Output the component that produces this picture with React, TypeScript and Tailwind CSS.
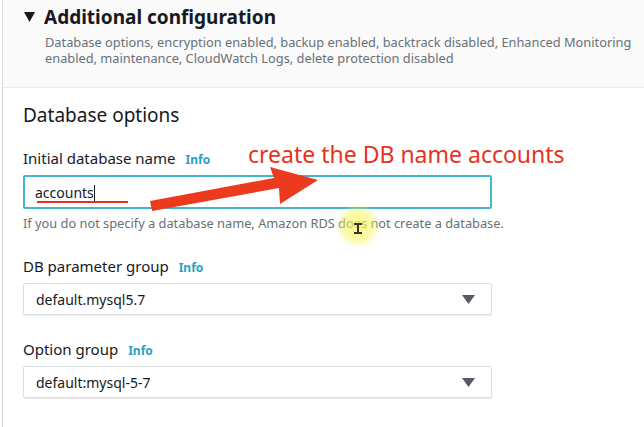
import React from "react";

const font = { fontFamily: '"Noto Sans", "Open Sans", sans-serif' };

function InfoLink() {
  return <span className="ml-[10px] text-[12px] font-bold text-[#2a9fc0]">Info</span>;
}

function SelectBox({ value }: { value: string }) {
  return (
    <div className="flex h-[32px] w-[469px] items-center justify-between rounded-[2px] border border-[#dadfe0] bg-white pl-[12px] pr-[16px] text-[14px] text-[#16191f] shadow-[0_1px_1px_rgba(0,0,0,0.08)]">
      <span>{value}</span>
      <svg width="13" height="9" viewBox="0 0 13 9">
        <path d="M0 0 H13 L6.5 9 Z" fill="#545b64" />
      </svg>
    </div>
  );
}

export default function App() {
  return (
    <div className="relative h-[427px] w-[644px] overflow-hidden bg-white pl-[2px]" style={font}>
      <div className="h-full border-l border-[#d5dbdb]">
        {/* expandable header */}
        <div className="h-[88px] border-b border-[#eaeded] bg-[#fafafa] pt-[4px]">
          <div className="flex items-center">
            <svg className="ml-[21px] mr-[9px]" width="11" height="10" viewBox="0 0 11 10">
              <path d="M0 0 H11 L5.5 10 Z" fill="#16191f" />
            </svg>
            <span className="text-[19px] font-bold leading-[26px] text-[#16191f]">Additional configuration</span>
          </div>
          <p className="ml-[42px] mt-[4px] w-[600px] text-[12.8px] leading-[16px] text-[#687078]">
            Database options, encryption enabled, backup enabled, backtrack disabled, Enhanced Monitoring enabled,
            maintenance, CloudWatch Logs, delete protection disabled
          </p>
        </div>

        <div className="pl-[20px] pt-[15px]">
          <h2 className="text-[19px] leading-[24px] text-[#16191f]">Database options</h2>

          <div className="mt-[21px] flex h-[20px] items-baseline text-[15px] leading-[20px] text-[#16191f]">
            Initial database name
            <InfoLink />
          </div>
          <div className="mt-[7px] flex h-[34px] w-[469px] items-center rounded-[2px] border-2 border-[#44b4cc] pl-[10px] text-[14px] text-[#16191f]">
            <span className="relative">
              accounts
              <span className="inline-block h-[16px] w-px translate-y-[3px] bg-[#16191f]" />
              <span className="absolute left-[2px] top-[19px] h-[2px] w-[91px] bg-[#e8321e]" />
            </span>
          </div>
          <p className="mt-[6px] text-[12.8px] leading-[16px] text-[#687078]">
            If you do not specify a database name, Amazon RDS does not create a database.
          </p>

          <div className="mt-[25px] flex h-[20px] items-baseline text-[15px] leading-[20px] text-[#16191f]">
            DB parameter group
            <InfoLink />
          </div>
          <div className="mt-[7px]">
            <SelectBox value="default.mysql5.7" />
          </div>

          <div className="mt-[24px] flex h-[20px] items-baseline text-[15px] leading-[20px] text-[#16191f]">
            Option group
            <InfoLink />
          </div>
          <div className="mt-[7px]">
            <SelectBox value="default:mysql-5-7" />
          </div>
        </div>
      </div>

      {/* video annotation overlay */}
      <div className="absolute left-[248px] top-[139px] text-[23px] leading-[30px] text-[#e8321e]" style={font}>
        create the DB name accounts
      </div>
      <svg className="absolute left-0 top-0" width="644" height="427">
        <polygon points="150,201 152,211 279,188 280,204 318,180 270,167 274,178" fill="#ec3a1f" />
      </svg>
      <div className="absolute left-[336px] top-[204px] h-[44px] w-[44px] rounded-full bg-[radial-gradient(circle,rgba(250,245,90,0.8)_0%,rgba(250,245,90,0.45)_50%,rgba(250,245,90,0)_72%)]" />
      <div className="absolute left-[354px] top-[223px] h-[11px] w-[8px] border-y-2 border-[#333]">
        <div className="mx-auto h-full w-[2px] bg-[#333]" />
      </div>
    </div>
  );
}
